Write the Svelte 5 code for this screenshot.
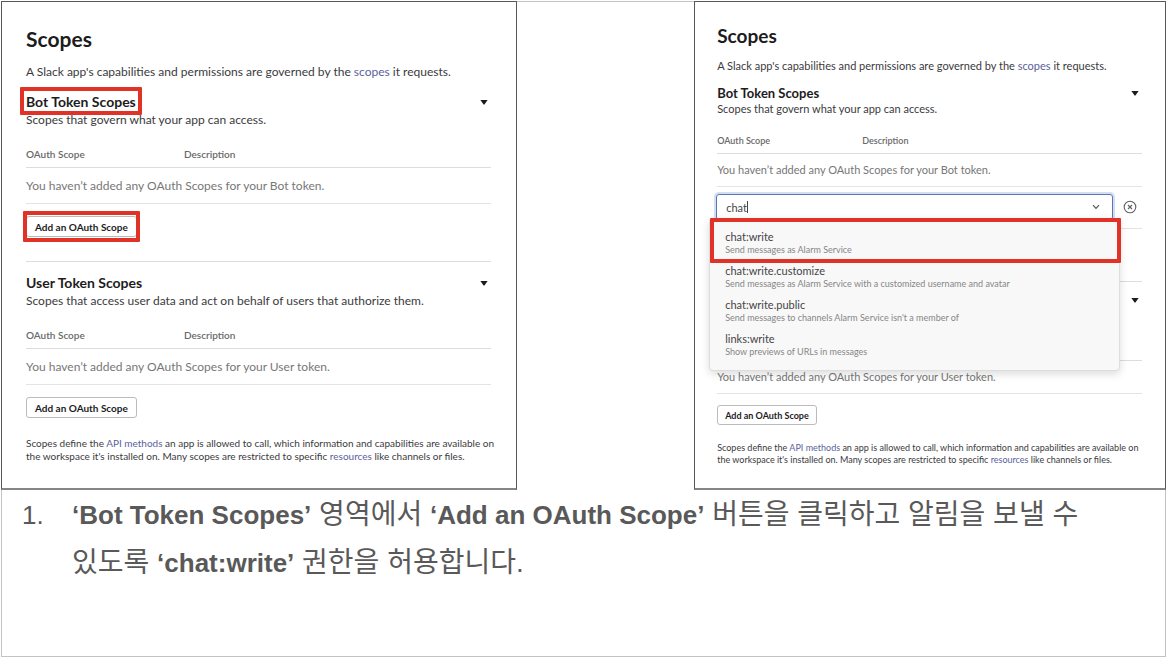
<script>
  const sections = [
    {
      id: 'bot',
      title: 'Bot Token Scopes',
      text: 'Scopes that govern what your app can access.',
      empty: 'You haven’t added any OAuth Scopes for your Bot token.',
    },
    {
      id: 'user',
      title: 'User Token Scopes',
      text: 'Scopes that access user data and act on behalf of users that authorize them.',
      empty: 'You haven’t added any OAuth Scopes for your User token.',
    },
  ];

  const options = [
    { name: 'chat:write', note: 'Send messages as Alarm Service' },
    { name: 'chat:write.customize', note: 'Send messages as Alarm Service with a customized username and avatar' },
    { name: 'chat:write.public', note: "Send messages to channels Alarm Service isn't a member of" },
    { name: 'links:write', note: 'Show previews of URLs in messages' },
  ];

  let query = $state('chat');
</script>

{#snippet picker()}
  <div class="picker">
    <div class="combo">
      <label class="field">
        <input type="text" aria-label="OAuth Scope" bind:value={query} />
        <span class="caret"></span>
        <svg class="chevron" viewBox="0 0 8 6" aria-hidden="true"><path d="M1 1.2 4 4.4 7 1.2" /></svg>
      </label>
      <ul class="menu">
        {#each options as option, i}
          <li class:marked={i === 0}>
            <span class="name">{option.name}</span>
            <span class="note">{option.note}</span>
          </li>
        {/each}
      </ul>
    </div>
    <button class="clear" type="button" aria-label="Remove scope">
      <svg viewBox="0 0 14 14" aria-hidden="true">
        <circle cx="7" cy="7" r="5.8" />
        <path d="M5 5 9 9M9 5 5 9" />
      </svg>
    </button>
  </div>
{/snippet}

{#snippet panel(open)}
  <article class="panel" class:compact={open}>
    <h2>Scopes</h2>
    <p class="intro">
      A Slack app's capabilities and permissions are governed by the <a href="#scopes">scopes</a> it requests.
    </p>
    {#each sections as section}
      <section>
        <header>
          <h3><span class:boxed={!open && section.id === 'bot'}>{section.title}</span></h3>
          <svg class="arrow" viewBox="0 0 8 5" aria-hidden="true"><path d="M0.4 0h7.2L4.6 4.3a.8.8 0 0 1-1.2 0Z" /></svg>
        </header>
        <p class="text">{section.text}</p>
        <table>
          <thead>
            <tr><th class="first" scope="col">OAuth Scope</th><th scope="col">Description</th></tr>
          </thead>
          <tbody>
            <tr><td colspan="2">{section.empty}</td></tr>
          </tbody>
        </table>
        {#if open && section.id === 'bot'}
          {@render picker()}
        {/if}
        <span class="action" class:boxed={!open && section.id === 'bot'}>
          <button class="add" type="button">Add an OAuth Scope</button>
        </span>
      </section>
    {/each}
    <p class="foot">
      Scopes define the <a href="#methods">API methods</a> an app is allowed to call, which information and
      capabilities are available on the workspace it's installed on. Many scopes are restricted to specific
      <a href="#resources">resources</a> like channels or files.
    </p>
  </article>
{/snippet}

<main>
  <div class="panels">
    {@render panel(false)}
    {@render panel(true)}
  </div>
  <ol>
    <li>
      <span class="number">1.</span>
      <p>
        <b>‘Bot Token Scopes’</b> 영역에서 <b>‘Add an OAuth Scope’</b> 버튼을 클릭하고 알림을 보낼 수 있도록
        <b>‘chat:write’</b> 권한을 허용합니다.
      </p>
    </li>
  </ol>
</main>

<style>
  :global(body) {
    margin: 0;
    background: #fff;
  }
  main {
    box-sizing: border-box;
    min-height: calc(100vh - 1px);
    margin: 1px 0 0 1px;
    border: 1px solid #c3c3c3;
    color: #595959;
    font-family: 'Liberation Sans', 'Noto Sans CJK KR', sans-serif;
  }
  h2, h3, p, ul, ol {
    margin: 0;
    padding: 0;
  }
  ul, ol {
    list-style: none;
  }
  .panels {
    display: flex;
    justify-content: space-between;
    margin: -1px;
  }
  .panel {
    --title: 21px;
    --title-line: 28px;
    --heading: 14px;
    --body: 12px;
    --line: 18px;
    --small: 10px;
    --foot-line: 13px;
    --gap: 8px;
    --column: 158px;
    box-sizing: border-box;
    width: 44.3%;
    padding: 23px 25px 25px 24px;
    border: 1px solid #595959;
    border-bottom: 2px solid #858585;
    background: #fff;
    color: #3b3a3d;
    font-family: Lato, sans-serif;
    font-size: var(--body);
    line-height: var(--line);
  }
  .panel.compact {
    --title: 19px;
    --title-line: 26px;
    --heading: 13px;
    --body: 11px;
    --line: 16px;
    --small: 9px;
    --foot-line: 12px;
    --gap: 7px;
    --column: 145px;
    width: 40.5%;
    padding: 21px 23px 20px 22px;
  }
  h2 {
    color: #1d1c1d;
    font-size: var(--title);
    font-weight: 700;
    line-height: var(--title-line);
  }
  .intro {
    margin: calc(var(--gap) + 2px) 0 calc(var(--gap) + 4px);
  }
  a {
    color: #5a5f9c;
    text-decoration: none;
  }
  section + section {
    margin-top: 24px;
    padding-top: 12px;
    border-top: 1px solid #ddd;
  }
  .compact section + section {
    margin-top: 21px;
    padding-top: 10px;
  }
  header {
    display: flex;
    align-items: center;
    justify-content: space-between;
  }
  h3 {
    color: #1d1c1d;
    font-size: var(--heading);
    font-weight: 700;
    line-height: var(--line);
  }
  h3 span, .action {
    position: relative;
  }
  .action {
    display: inline-flex;
    margin-top: calc(var(--gap) + 4px);
    vertical-align: top;
  }
  .boxed::after, .marked::after {
    content: '';
    position: absolute;
    border: 4px solid #e03226;
    border-radius: 1px;
    pointer-events: none;
  }
  .boxed::after {
    inset: -6px -6px -5px;
  }
  .action.boxed::after {
    inset: -5px -3px;
  }
  .arrow {
    width: 8px;
    height: 5px;
    margin-right: 3px;
    fill: #1d1c1d;
  }
  table {
    width: 100%;
    margin-top: 16px;
    border-collapse: collapse;
    table-layout: fixed;
  }
  th {
    padding: 0 0 4px;
    border-bottom: 1px solid #ddd;
    color: #696969;
    font-size: var(--small);
    font-weight: 600;
    text-align: left;
  }
  .first {
    width: var(--column);
  }
  td {
    padding: 9px 0 8px;
    border-bottom: 1px solid #e4e4e4;
    color: #777;
  }
  .compact td {
    padding: 8px 0;
  }
  .add {
    height: 21px;
    padding: 0 8px;
    border: 1px solid #bbb;
    border-radius: 3px;
    background: #fff;
    color: #1d1c1d;
    font: 700 var(--small) Lato, sans-serif;
  }
  .compact .add {
    height: 20px;
    padding: 0 7px;
  }
  .foot {
    margin: 19px -6px 0 0;
    font-size: var(--small);
    line-height: var(--foot-line);
  }
  .compact .foot {
    margin-top: 17px;
  }
  .picker {
    display: flex;
    align-items: center;
    gap: 10px;
    padding: 7px 5px 8px 0;
    border-bottom: 1px solid #e4e4e4;
  }
  .combo {
    position: relative;
    flex: 1;
    margin-left: -1px;
  }
  .field {
    display: flex;
    align-items: center;
    box-sizing: border-box;
    height: 26px;
    padding: 0 12px 0 9px;
    border: 1px solid #5b76b5;
    border-radius: 3px;
    box-shadow: 0 0 0 2px #d3dff0;
  }
  input {
    field-sizing: content;
    padding: 0;
    border: 0;
    outline: 0;
    background: none;
    color: #454447;
    font: var(--body) Lato, sans-serif;
  }
  .caret {
    width: 1px;
    height: 12px;
    background: #444;
  }
  .chevron {
    width: 8px;
    height: 6px;
    margin-left: auto;
    fill: none;
    stroke: #555;
    stroke-width: 1.2;
  }
  .clear {
    width: 14px;
    height: 14px;
    padding: 0;
    border: 0;
    background: none;
  }
  .clear svg {
    display: block;
    fill: none;
    stroke: #616061;
    stroke-width: 1.1;
  }
  .menu {
    position: absolute;
    z-index: 1;
    top: 24px;
    right: -7px;
    left: -7px;
    display: grid;
    gap: 8px;
    padding: 11px 15px 12px;
    border: 1px solid #ddd;
    border-radius: 4px;
    background: #f8f8f8;
    box-shadow: 0 3px 8px #00000024;
  }
  .menu li {
    display: grid;
  }
  .marked::after {
    inset: -1px -2px auto 0;
    height: 37px;
  }
  .name {
    color: #454447;
    line-height: 14px;
  }
  .note {
    color: #868686;
    font-size: var(--small);
    line-height: 12px;
  }
  .compact .action {
    margin-top: 11px;
  }
  ol {
    padding: 2px 72px 40px 20px;
    font-size: 26px;
    line-height: 47px;
  }
  ol li {
    display: flex;
    align-items: baseline;
  }
  .number {
    flex: 0 0 50px;
  }
  ol p {
    font-size: 28px;
    word-break: keep-all;
  }
  b {
    font-size: 26px;
    font-weight: 700;
  }
</style>
